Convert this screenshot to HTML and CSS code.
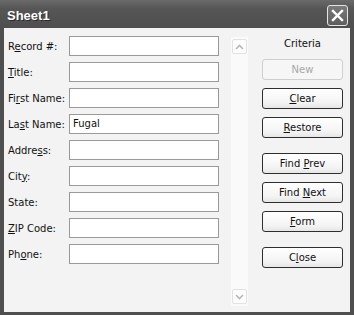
FILE: index.html
```html
<!DOCTYPE html>
<html>
<head>
<meta charset="utf-8">
<link rel="stylesheet" href="styles.css">
</head>
<body>
<div class="window">
  <div class="titlebar">
    <span class="title">Sheet1</span>
    <span class="close-btn">
      <svg width="13" height="13" viewBox="0 0 13 13"><path d="M2 2 L11 11 M11 2 L2 11" stroke="#fff" stroke-width="2.4" stroke-linecap="square"/></svg>
    </span>
  </div>
  <div class="body">
    <div class="fields">
      <div class="row"><span class="label">R<u>e</u>cord #:</span><span class="input"></span></div>
      <div class="row"><span class="label"><u>T</u>itle:</span><span class="input"></span></div>
      <div class="row"><span class="label">Fi<u>r</u>st Name:</span><span class="input"></span></div>
      <div class="row"><span class="label">La<u>s</u>t Name:</span><span class="input">Fugal</span></div>
      <div class="row"><span class="label">Addre<u>s</u>s:</span><span class="input"></span></div>
      <div class="row"><span class="label">Cit<u>y</u>:</span><span class="input"></span></div>
      <div class="row"><span class="label">State:</span><span class="input"></span></div>
      <div class="row"><span class="label"><u>Z</u>IP Code:</span><span class="input"></span></div>
      <div class="row"><span class="label">Ph<u>o</u>ne:</span><span class="input"></span></div>
    </div>
    <div class="scrollbar">
      <span class="arrow"><svg width="9" height="6" viewBox="0 0 9 6"><path d="M1 5 L4.5 1.5 L8 5" fill="none" stroke="#b8b8b8" stroke-width="1.6"/></svg></span>
      <span class="arrow"><svg width="9" height="6" viewBox="0 0 9 6"><path d="M1 1 L4.5 4.5 L8 1" fill="none" stroke="#b8b8b8" stroke-width="1.6"/></svg></span>
    </div>
    <div class="buttons">
      <div class="criteria">Criteria</div>
      <div class="btn disabled">New</div>
      <div class="btn"><u>C</u>lear</div>
      <div class="btn"><u>R</u>estore</div>
      <div class="btn sep">Find <u>P</u>rev</div>
      <div class="btn">Find <u>N</u>ext</div>
      <div class="btn"><u>F</u>orm</div>
      <div class="btn sep">C<u>l</u>ose</div>
    </div>
  </div>
</div>
</body>
</html>
```

FILE: styles.css
```css
html, body {
  margin: 0;
  padding: 0;
  background: #ffffff;
}
.window {
  width: 354px;
  height: 315px;
  display: flex;
  flex-direction: column;
  background: #4f4f4f;
  box-sizing: border-box;
}
.titlebar {
  height: 28px;
  display: flex;
  align-items: center;
  justify-content: space-between;
  padding: 0 6px 0 7px;
  background: linear-gradient(#6a6a6a, #565656 30%, #4e4e4e);
  flex-shrink: 0;
}
.title {
  font-family: "Liberation Sans", sans-serif;
  font-weight: bold;
  font-size: 13px;
  color: #ffffff;
  text-shadow: 1px 1px 0 #2a2a2a;
  margin-top: 2px;
}
.close-btn {
  width: 19px;
  height: 19px;
  border: 1px solid #e4e4e4;
  border-radius: 3px;
  background: linear-gradient(#7a7a7a, #5e5e5e);
  display: flex;
  align-items: center;
  justify-content: center;
  margin-top: 2px;
}
.body {
  flex: 1;
  margin: 0 4px 3px 4px;
  background: #f3f3f3;
  display: flex;
  font-family: "DejaVu Sans", sans-serif;
  font-size: 10px;
  color: #111;
}
.fields {
  padding: 8px 0 0 4px;
  display: flex;
  flex-direction: column;
  gap: 6px;
}
.row {
  display: flex;
  align-items: center;
  height: 20px;
}
.label {
  width: 61px;
}
.input {
  width: 150px;
  height: 20px;
  box-sizing: border-box;
  border: 1px solid #9a9a9a;
  background: #ffffff;
  padding: 0 3px;
  line-height: 18px;
}
.scrollbar {
  width: 17px;
  margin: 9px 0 6px 12px;
  background: #fafafa;
  display: flex;
  flex-direction: column;
  justify-content: space-between;
  align-items: center;
}
.arrow {
  width: 15px;
  height: 15px;
  box-sizing: border-box;
  border: 1px solid #e2e2e2;
  border-radius: 2px;
  background: #fdfdfd;
  display: flex;
  align-items: center;
  justify-content: center;
  margin-top: 2px;
  margin-bottom: 2px;
}
.buttons {
  margin-left: 14px;
  width: 81px;
  display: flex;
  flex-direction: column;
  gap: 8px;
  padding-top: 8px;
}
.criteria {
  height: 15px;
  text-align: center;
  line-height: 15px;
  margin-bottom: 0;
}
.btn {
  height: 21px;
  box-sizing: border-box;
  border: 1px solid #2e2e2e;
  border-radius: 3px;
  background: linear-gradient(#ffffff, #f4f4f4 70%, #e6e6e6);
  text-align: center;
  line-height: 19px;
}
.btn.disabled {
  border-color: #cfcfcf;
  color: #a8a8a8;
  background: #f6f6f6;
}
.btn.sep {
  margin-top: 7px;
}
u {
  text-decoration: underline;
  text-underline-offset: 1px;
}
```
